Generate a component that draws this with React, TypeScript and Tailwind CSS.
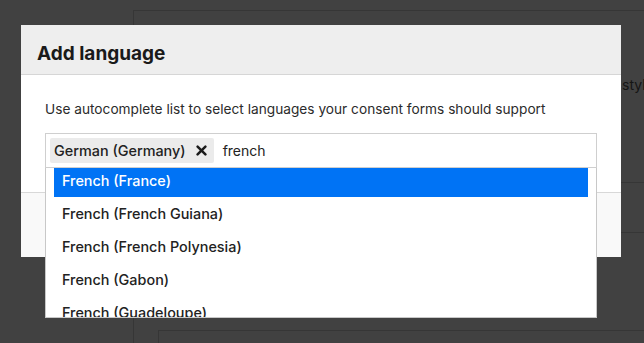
import { useState } from "react";

const options = [
  "French (France)",
  "French (French Guiana)",
  "French (French Polynesia)",
  "French (Gabon)",
  "French (Guadeloupe)",
];

const CloseIcon = () => (
  <svg width="11" height="11" viewBox="0 0 11 11" className="text-[#1a1a1a]">
    <path d="M1.6 1.6 9.4 9.4M9.4 1.6 1.6 9.4" stroke="currentColor" strokeWidth="2.5" strokeLinecap="round" />
  </svg>
);

const App = () => {
  const [active] = useState(0);

  return (
    <div className="relative h-[343px] w-[644px] overflow-hidden bg-[#414141] font-['Inter','Noto_Sans',sans-serif]">
      {/* page behind the overlay */}
      <div className="ml-[133px] mt-[10px] h-full border-l border-t border-[#363636]">
        <div className="h-[171px] pl-[488px] pt-[64px] text-[14px] leading-5 text-[#151515]">
          <span className="whitespace-nowrap">style</span>
        </div>
        <div className="h-[50px] border-t border-[#363636]" />
        <div className="h-[98px] border-t border-[#363636]" />
        <div className="ml-[24px] h-[40px] border-l border-t border-[#363636]" />
      </div>

      {/* modal */}
      <div className="absolute left-[21px] top-[25px] w-[600px] bg-white">
        <div className="flex h-[50px] items-center border-b border-[#d6d6d6] bg-[#eeeeee] pl-4 pt-[9px]">
          <h2 className="text-[19px] font-bold leading-6 text-[#1a1a1a]">Add language</h2>
        </div>
        <div className="px-6 pb-6 pt-6">
          <p className="mb-[14px] text-[13.7px] leading-5 text-[#2b2b2b]">
            Use autocomplete list to select languages your consent forms should support
          </p>
          <div className="relative">
            <div className="flex h-[35px] items-center border border-[#cfcfcf] p-1">
              <span className="flex h-[25px] items-center gap-[10px] rounded-[2px] bg-[#ebebeb] pl-1 pr-[7px] text-[14.4px] font-medium text-[#222]">
                German (Germany)
                <CloseIcon />
              </span>
              <span className="ml-[9px] text-[14px] text-[#222]">french</span>
            </div>
            <div className="absolute left-0 right-0 top-full h-[150px] overflow-hidden border-x border-b border-[#c8c8c8] bg-white">
              <ul className="-mt-[4px]">
                {options.map((o, i) => (
                  <li
                    key={o}
                    className={
                      i === active
                        ? "mx-2 flex h-[33px] items-center bg-[#0073f5] pl-2 text-[14.4px] font-medium text-white"
                        : "mx-2 flex h-[33px] items-center pl-2 text-[14.4px] font-medium text-[#222]"
                    }
                  >
                    {o}
                  </li>
                ))}
              </ul>
            </div>
          </div>
        </div>
        <div className="h-[65px] border-t border-[#d8d8d8] bg-[#f9f9f9]" />
      </div>
    </div>
  );
};

export default App;
